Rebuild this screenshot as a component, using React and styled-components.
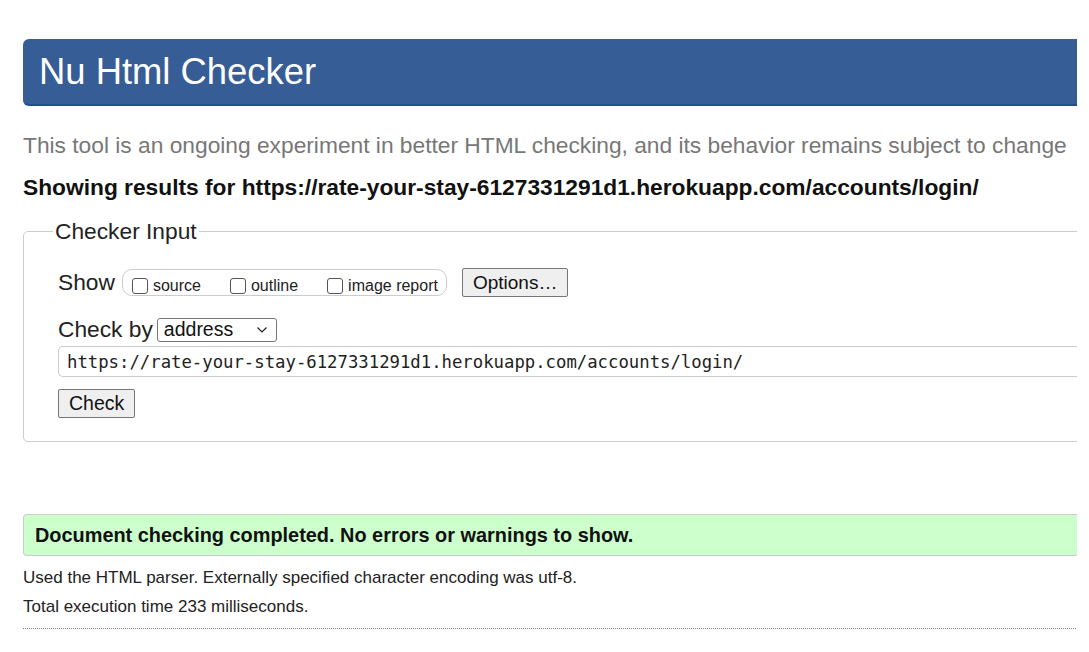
import { createGlobalStyle, styled } from 'styled-components';

const GlobalStyle = createGlobalStyle`
    html, body {
        margin: 0;
        padding: 0;
        background: #fff;
        overflow: hidden;
    }
    body {
        font-family: 'Liberation Sans', Arial, sans-serif;
        color: #111;
    }
`;

const Frame = styled.div`
    width: 1077px;
    overflow: hidden;
`;

const Page = styled.div`
    width: 1200px;
    padding: 39px 0 0 23px;
    box-sizing: border-box;
`;

const Header = styled.h1`
    margin: 0;
    height: 67px;
    display: flex;
    align-items: center;
    padding-left: 16px;
    background: #365d95;
    border-bottom: 2px solid #1f4f8f;
    border-radius: 6px 0 0 6px;
    color: #fff;
    font-weight: 400;
    font-size: 36.4px;
    box-sizing: border-box;
`;

const Intro = styled.p`
    margin: 26px 0 0;
    color: #777;
    font-size: 22.75px;
    line-height: 27px;
`;

const Results = styled.h2`
    margin: 15px 0 0;
    font-size: 22.75px;
    line-height: 27px;
    font-weight: 700;
    color: #111;
`;

const Fieldset = styled.fieldset`
    margin: 17px 0 0;
    padding: 10px 0 23px 34px;
    border: 1px solid #ccc;
    border-radius: 5px;
    min-width: 0;
    & legend {
        padding: 0 2px;
        margin-left: -5px;
        font-size: 22.75px;
        color: #222;
    }
`;

const Row = styled.div`
    display: flex;
    align-items: center;
    gap: 6px;
    margin-top: ${p => p.$top || 0}px;
    font-size: 22.75px;
    color: #222;
`;

const Pill = styled.div`
    display: flex;
    align-items: center;
    gap: 29px;
    height: 25px;
    padding: 0 8px 0 9px;
    border: 1px solid #ccc;
    border-radius: 10px;
    margin-left: 1px;
`;

const Check = styled.label`
    display: flex;
    align-items: center;
    gap: 5px;
    font-size: 16px;
    color: #222;
    & span {
        position: relative;
        top: 3px;
    }
`;

const Box = styled.span`
    width: 16px;
    height: 16px;
    border: 1px solid #555;
    border-radius: 3px;
    box-sizing: border-box;
    background: #fff;
    position: relative;
    top: -3px;
`;

const Button = styled.button`
    font-family: 'Liberation Sans', Arial, sans-serif;
    font-size: ${p => p.$size || 19.5}px;
    color: #111;
    height: 29px;
    padding: 0 ${p => p.$pad || 10}px;
    margin-left: ${p => p.$left || 0}px;
    background: #efefef;
    border: 1px solid #767676;
    border-radius: 2px;
`;

const Select = styled.div`
    width: 120px;
    height: 24px;
    margin-left: -2px;
    border: 1px solid #767676;
    border-radius: 3px;
    box-sizing: border-box;
    display: flex;
    align-items: center;
    justify-content: space-between;
    padding: 0 8px 0 6px;
    font-size: 19.5px;
    color: #111;
`;

const UrlInput = styled.div`
    margin-top: 3px;
    height: 31px;
    padding-left: 8px;
    border: 1px solid #ccc;
    border-right: none;
    border-radius: 5px 0 0 5px;
    display: flex;
    align-items: center;
    font-family: 'DejaVu Sans Mono', 'Liberation Mono', monospace;
    font-size: 17.3px;
    color: #222;
    box-sizing: border-box;
`;

const Success = styled.div`
    margin-top: 72px;
    height: 42px;
    display: flex;
    align-items: center;
    padding-left: 11px;
    background: #ccffcc;
    border: 1px solid #ccc;
    border-right: none;
    border-radius: 4px 0 0 4px;
    box-sizing: border-box;
    font-size: 19.9px;
    font-weight: 700;
    color: #111;
`;

const Note = styled.p`
    margin: ${p => p.$top || 0}px 0 0;
    font-size: 17px;
    line-height: 20px;
    color: #222;
`;

const Dotted = styled.hr`
    margin: 11px 0 0;
    border: none;
    border-top: 1px dotted #888;
`;

function Chevron() {
    return (
        <svg width="12" height="8" viewBox="0 0 12 8" fill="none">
            <path d="M1.5 1.5 L6 6 L10.5 1.5" stroke="#222" strokeWidth="1.2" />
        </svg>
    );
}

function App() {
    return (
        <Frame>
            <GlobalStyle />
            <Page>
                <Header>Nu Html Checker</Header>
                <Intro>
                    This tool is an ongoing experiment in better HTML checking, and its behavior remains subject to change
                </Intro>
                <Results>Showing results for https://rate-your-stay-6127331291d1.herokuapp.com/accounts/login/</Results>
                <Fieldset>
                    <legend>Checker Input</legend>
                    <Row $top={13}>
                        Show
                        <Pill>
                            <Check><Box /><span>source</span></Check>
                            <Check><Box /><span>outline</span></Check>
                            <Check><Box /><span>image report</span></Check>
                        </Pill>
                        <Button $left={9} $size={19}>Options…</Button>
                    </Row>
                    <Row $top={19}>
                        Check by
                        <Select>
                            address
                            <Chevron />
                        </Select>
                    </Row>
                    <UrlInput>https://rate-your-stay-6127331291d1.herokuapp.com/accounts/login/</UrlInput>
                    <Row $top={12}>
                        <Button>Check</Button>
                    </Row>
                </Fieldset>
                <Success>Document checking completed. No errors or warnings to show.</Success>
                <Note $top={12}>Used the HTML parser. Externally specified character encoding was utf-8.</Note>
                <Note $top={9}>Total execution time 233 milliseconds.</Note>
                <Dotted />
            </Page>
        </Frame>
    );
}

export default App;
